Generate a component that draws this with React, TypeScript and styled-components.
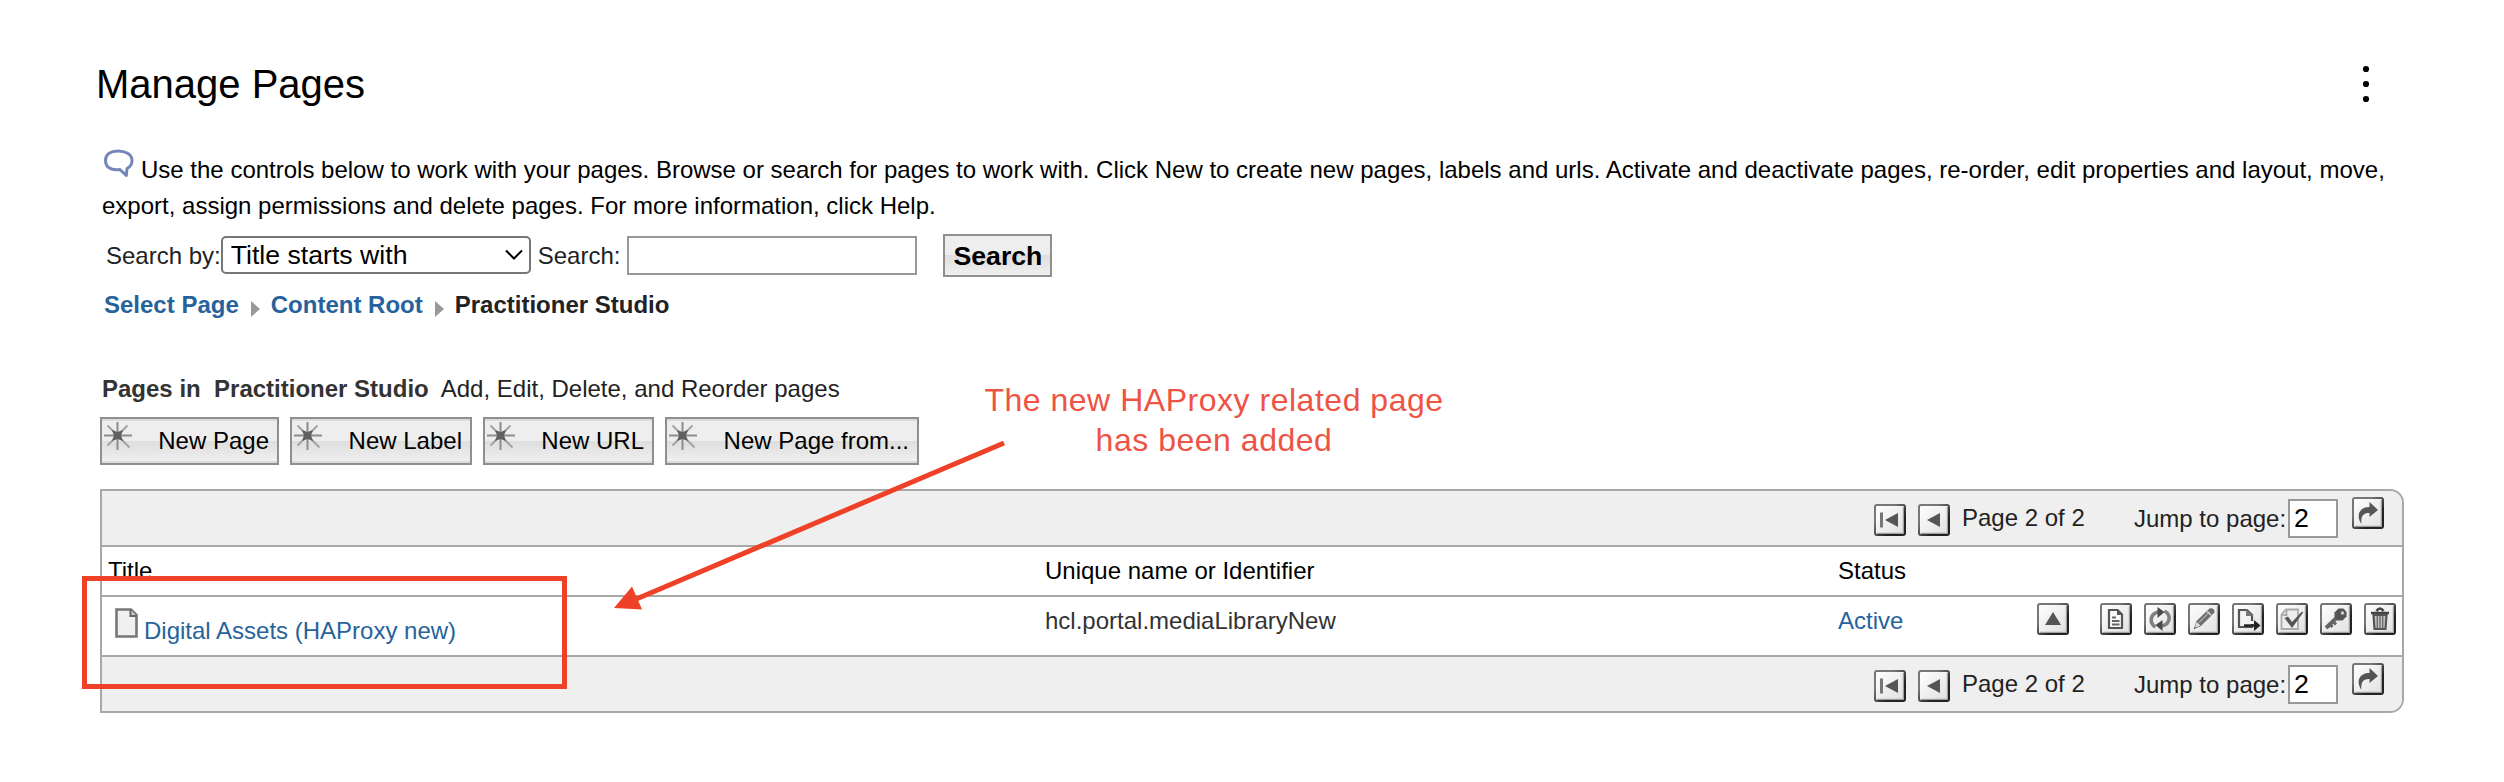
import React from 'react';
import styled, { createGlobalStyle } from 'styled-components';

const Global = createGlobalStyle`
  *, *::before, *::after { box-sizing: border-box; }
  body { margin: 0; background: #fff; font-family: "Liberation Sans", Arial, sans-serif; font-size: 24px; line-height: 36px; color: #222; }
`;

const Page = styled.main`
  position: relative;
  width: 2504px;
  height: 782px;
  padding: 60px 100px 0;
  overflow: hidden;
`;

const Header = styled.header`
  display: flex;
  justify-content: space-between;
  padding: 0 33px 0 0;
  height: 84px;
`;

const Heading = styled.h1`
  margin: 0 0 0 -4px;
  padding-top: 1px;
  font-size: 40px;
  font-weight: 400;
  line-height: 46px;
  color: #000;
`;

const Dots = styled.svg`
  width: 8px;
  height: 38px;
  margin: 5px 1px 0 0;
`;

const Intro = styled.p`
  margin: 0;
  padding: 8px 0 0 2px;
  height: 88px;
  color: #000;
  white-space: nowrap;
`;

const Bubble = styled.svg`
  width: 32px;
  height: 32px;
  margin-right: 7px;
  vertical-align: -2px;
  margin-top: -4px;
`;

const SearchRow = styled.form`
  display: flex;
  align-items: flex-start;
  height: 44px;
  margin-top: 2px;
  padding-left: 6px;
`;

const Label = styled.label`
  padding-top: 3px;
  line-height: 38px;
`;

const Select = styled.div`
  display: flex;
  align-items: center;
  justify-content: space-between;
  width: 310px;
  height: 38px;
  margin: 2px 7px 0 0;
  padding: 0 6px 0 8px;
  border: 2px solid #767676;
  border-radius: 5px;
  background: #fff;
  color: #000;
  font-size: 26.67px;
  line-height: 34px;
`;

const TextInput = styled.input`
  width: 290px;
  height: 39px;
  margin: 2px 0 0 7px;
  border: 2px solid #999;
  border-radius: 0;
  background: #fff;
`;

const SearchButton = styled.button`
  width: 109px;
  height: 43px;
  margin-left: 26px;
  padding: 0;
  border: 2px solid #8f8f8f;
  background: linear-gradient(#eee 0 50%, #dedede 50%, #f0f0f0 100%);
  color: #000;
  font: bold 26.67px/36px "Liberation Sans", Arial, sans-serif;
`;

const Crumbs = styled.nav`
  display: flex;
  align-items: center;
  height: 36px;
  margin-top: 9px;
  padding-left: 4px;
  font-weight: 700;
`;

const Link = styled.a`
  color: #26639c;
`;

const CrumbArrow = styled.svg`
  width: 9px;
  height: 18px;
  margin: 8px 11px 0 12px;
`;

const Section = styled.h2`
  display: flex;
  margin: 48px 0 0;
  padding-left: 2px;
  height: 46px;
  font-size: 24px;
  font-weight: 400;
  white-space: pre;
  strong { color: #333; }
`;

const ButtonRow = styled.div`
  display: flex;
  gap: 11px;
  height: 72px;
`;

const ToolButton = styled.button<{ $width: number }>`
  display: flex;
  align-items: flex-start;
  justify-content: space-between;
  width: ${(p) => p.$width}px;
  height: 48px;
  padding: 0 8px 0 2px;
  border: 2px solid #8f8f8f;
  box-shadow: inset 0 2px #dcdcdc, inset 0 -2px #dcdcdc;
  background: linear-gradient(#eee 0 50%, #dedede 50%, #f0f0f0 100%);
  color: #000;
  font: 24px/44px "Liberation Sans", Arial, sans-serif;
  svg { width: 28px; height: 28px; margin-top: 3px; }
`;

const Table = styled.section`
  width: 2304px;
  height: 224px;
  border: 2px solid #a8a8a8;
  border-radius: 0 14px 14px 0;
  overflow: hidden;
  background: #fff;
`;

const Pager = styled.div`
  display: flex;
  align-items: flex-start;
  height: 54px;
  padding-left: 1772px;
  background: #efefef;
`;

const PageLabel = styled.span`
  width: 172px;
  margin-left: 12px;
  padding-top: 9px;
`;

const JumpLabel = styled.label`
  width: 154px;
  padding-top: 10px;
  white-space: nowrap;
`;

const PageInput = styled.div`
  width: 50px;
  height: 39px;
  margin: 8px 14px 0 0;
  padding-left: 4px;
  border: 2px solid #999;
  background: #fff;
  color: #000;
  font-size: 26.67px;
  line-height: 35px;
`;

const Row = styled.div<{ $height: number; $color: string }>`
  display: grid;
  grid-template-columns: 937px 793px 204px 1fr;
  align-items: start;
  height: ${(p) => p.$height}px;
  padding: 6px 0 0 6px;
  border-top: 2px solid #a8a8a8;
  color: ${(p) => p.$color};
`;

const Footer = styled.div`
  border-top: 2px solid #a8a8a8;
`;

const TitleCell = styled.div`
  display: flex;
  padding: 5px 0 0 7px;
  svg { width: 23px; height: 30px; margin: 0 6px 0 0; }
  a { padding-top: 5px; }
`;

const Actions = styled.div`
  display: flex;
  gap: 12px;
  margin-left: -5px;
  svg:first-child { margin-right: 19px; }
`;

const IconBox = styled.svg<{ $top?: number; $right?: number }>`
  flex: none;
  width: 32px;
  height: 32px;
  margin: ${(p) => p.$top ?? 0}px ${(p) => p.$right ?? 0}px 0 0;
`;

const Highlight = styled.div`
  position: absolute;
  left: 82px;
  top: 576px;
  width: 485px;
  height: 113px;
  border: 5px solid #ee4127;
`;

const Arrow = styled.svg`
  position: absolute;
  left: 600px;
  top: 430px;
  width: 420px;
  height: 190px;
`;

const Note = styled.p`
  position: absolute;
  left: 964px;
  top: 380px;
  width: 500px;
  margin: 0;
  color: #ee5344;
  font-size: 32px;
  line-height: 40px;
  letter-spacing: 0.52px;
  text-align: center;
  white-space: nowrap;
`;

const g = '#555';
const glyphs: Record<string, React.ReactNode> = {
  first: <><path d="M7.500 8.500v15" stroke="#777" strokeWidth="3" /><path d="M24 9v14L11 16z" fill={g} /></>,
  prev: <path d="M22 9v14L9 16z" fill={g} />,
  up: <path d="M16 9l8 13H8z" fill={g} />,
  go: <path d="M17.500 5l8.500 8-8.500 7v-4c-6-.5-9 3-8 11-6-9-2-17 8-17z" fill={g} />,
  doc: <><path d="M9 7h8.500l4.500 4.500V25H9z" fill="#fafafa" stroke={g} strokeWidth="2.200" /><path d="M17 6v6h6z" fill={g} /><path d="M12 14.500h4M12 18h7.500M12 21.500h7.500" stroke="#666" strokeWidth="1.800" fill="none" /></>,
  sync: <><path d="M11.500 24C5 20 6 11 14 9M20.500 8c7 4 6 13-2.500 15" stroke="#808080" strokeWidth="3.600" fill="none" /><path d="M13.500 4l7 5-7 6zM18.500 17v11l-7-6z" fill="#4a4a4a" /></>,
  edit: <><path d="M21.500 5.500c3-1 5.500 1 5 4L13 23l-7.500 3.500L8.500 18z" fill="#6e6e6e" /><path d="M11 19.500L22 8.500" stroke="#a5a5a5" strokeWidth="1.500" /><path d="M19 8.500l4.500 4" stroke="#ddd" strokeWidth="1.200" /><path d="M8.800 19l3.700 3.500-4.500 2-1-1z" fill="#ddd" /></>,
  move: <><path d="M7 7h8l5 5v12H7z" fill="#f4f4f4" stroke={g} strokeWidth="2.200" /><path d="M14 6v7h7z" fill="#777" /><path d="M15 19.500h9" stroke="#f2f2f2" strokeWidth="3" /><path d="M12 22.500h11" stroke="#222" strokeWidth="2.400" /><path d="M22 17l6.500 5.500-6.500 5.500z" fill="#222" /></>,
  check: <><path d="M10 6.500h12V26H5.500V11.500zM10.500 6v6H5" fill="#ededed" stroke="#aaa" strokeWidth="1.800" /><path d="M8.500 15l3.500-1.500 4 5.500L26 8.500l1.200 1L16 25z" fill="#555" /></>,
  key: <><path d="M6 25L18 13.500" stroke="#666" strokeWidth="4" /><path d="M9.500 21l3 3M12.500 18l3.500 3.500" stroke="#666" strokeWidth="3" /><path d="M14.500 9.500l4-4h5l3 3.500v4.500l-4 4h-5l-3-4z" fill={g} /><circle cx="22.500" cy="10" r="1.800" fill="#ccc" /></>,
  trash: <><path d="M12.500 8q3.500-5 7 0M7 10h18" fill="none" stroke="#444" strokeWidth="2.600" /><path d="M9.500 12h13l-1 14h-11z" fill="#c4c4c4" stroke="#555" strokeWidth="2.200" /><path d="M13.300 13v12M16 13v12M18.700 13v12" stroke="#666" strokeWidth="1.300" /></>,
};

const IconButton = ({ name, top, right }: { name: string; top?: number; right?: number }) => (
  <IconBox viewBox="0 0 32 32" $top={top} $right={right}>
    <defs>
      <linearGradient id={`bg-${name}`} x1="0" y1="0" x2="1" y2="1">
        <stop offset="0" stopColor="#fff" /><stop offset="1" stopColor="#e0e0e0" />
      </linearGradient>
      <linearGradient id={`edge-${name}`} x1="0" y1="0" x2="1" y2="1">
        <stop offset="0.300" stopColor="#777" /><stop offset="0.700" stopColor="#222" />
      </linearGradient>
    </defs>
    <rect x="1" y="1" width="30" height="30" rx="2" fill={`url(#bg-${name})`} stroke={`url(#edge-${name})`} strokeWidth="2" />
    <path d="M29.400 3v26.400H3" fill="none" stroke="#a0a0a0" strokeWidth="1.200" />
    {glyphs[name]}
  </IconBox>
);

const Star = () => (
  <svg viewBox="0 0 28 28">
    <path d="M13.500 0v28M0 13.500h28" stroke="#8c8c8c" strokeWidth="2" />
    <path d="M3.500 3.500l22 22M23.500 3.500L3.500 23.500" stroke="#a4a4a4" strokeWidth="2" />
    <path d="M8 8l5.500 2L19 8l-2 5.500 2 5.500-5.500-2L8 19l2-5.500z" fill="#606060" />
  </svg>
);

const PagerBar = () => (
  <Pager>
    <IconButton name="first" top={13} right={12} />
    <IconButton name="prev" top={13} />
    <PageLabel>Page 2 of 2</PageLabel>
    <JumpLabel>Jump to page:</JumpLabel>
    <PageInput>2</PageInput>
    <IconButton name="go" top={6} />
  </Pager>
);

const Crumb = () => <CrumbArrow viewBox="0 0 9 18"><path d="M0 1l9 8-9 8z" fill="#999" /></CrumbArrow>;

const tools = [
  { label: 'New Page', width: 179 },
  { label: 'New Label', width: 182 },
  { label: 'New URL', width: 171 },
  { label: 'New Page from...', width: 254 },
];

export default function App() {
  return (
    <Page>
      <Global />
      <Header>
        <Heading>Manage Pages</Heading>
        <Dots viewBox="0 0 8 38">
          <circle cx="4" cy="4" r="3.100" /><circle cx="4" cy="19" r="3.100" /><circle cx="4" cy="34" r="3.100" />
        </Dots>
      </Header>
      <Intro>
        <Bubble viewBox="0 0 32 32">
          <path d="M18 21.500C8 23 3.500 18.500 3.500 12.500C3.500 6 9 3 16 3s14 3 14 9.500c0 3.500-2 6.500-5 8l-.7 7z" fill="#fff" stroke="#7485b8" strokeWidth="3" strokeLinejoin="round" />
        </Bubble>
        Use the controls below to work with your pages. Browse or search for pages to work with. Click New to create new pages, labels and urls. Activate and deactivate pages, re-order, edit properties and layout, move,
        <br />
        export, assign permissions and delete pages. For more information, click Help.
      </Intro>
      <SearchRow>
        <Label>Search by:</Label>
        <Select>
          Title starts with
          <svg width="18" height="12" viewBox="0 0 18 12"><path d="M1 1.500l8 8 8-8" fill="none" stroke="#000" strokeWidth="2" /></svg>
        </Select>
        <Label>Search:</Label>
        <TextInput />
        <SearchButton type="button">Search</SearchButton>
      </SearchRow>
      <Crumbs>
        <Link>Select Page</Link>
        <Crumb />
        <Link>Content Root</Link>
        <Crumb />
        <span>Practitioner Studio</span>
      </Crumbs>
      <Section><strong>{'Pages in  Practitioner Studio'}</strong>{'  Add, Edit, Delete, and Reorder pages'}</Section>
      <ButtonRow>
        {tools.map((t) => (
          <ToolButton key={t.label} $width={t.width}><Star />{t.label}</ToolButton>
        ))}
      </ButtonRow>
      <Table>
        <PagerBar />
        <Row $height={50} $color="#000">
          <span>Title</span>
          <span>Unique name or Identifier</span>
          <span>Status</span>
        </Row>
        <Row $height={60} $color="#333">
          <TitleCell>
            <svg viewBox="0 0 23 30">
              <path d="M1.500 1.500H16L21.500 7v21.500h-20z" fill="#f0f0f0" stroke="#777" strokeWidth="2.600" />
              <path d="M15.500 1.500V8h6" fill="#ccc" stroke="#666" strokeWidth="2" />
            </svg>
            <Link>Digital Assets (HAProxy new)</Link>
          </TitleCell>
          <span>hcl.portal.mediaLibraryNew</span>
          <Link>Active</Link>
          <Actions>
            {['up', 'doc', 'sync', 'edit', 'move', 'check', 'key', 'trash'].map((n) => <IconButton key={n} name={n} />)}
          </Actions>
        </Row>
        <Footer><PagerBar /></Footer>
      </Table>
      <Highlight />
      <Arrow viewBox="600 430 420 190">
        <path d="M1004 443L634 600" stroke="#ee4127" strokeWidth="5" />
        <path d="M614 608l18-21.500 10 23z" fill="#ee4127" />
      </Arrow>
      <Note>The new HAProxy related page<br />has been added</Note>
    </Page>
  );
}
